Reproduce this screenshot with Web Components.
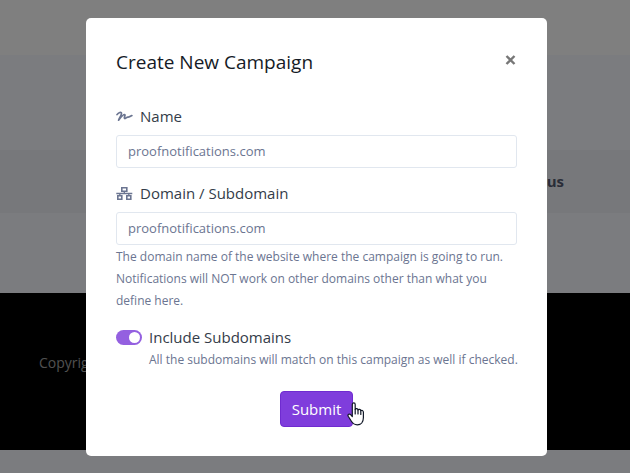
<!DOCTYPE html>
<html lang="en">
<head>
<meta charset="utf-8">
<meta name="viewport" content="width=device-width, initial-scale=1">
<title>Create New Campaign</title>
<style>
    :root {
        --primary: #7f3ddc;
        --primary-border: #6f2bd0;
        --text-color: #343c49;
        --muted-color: #6b7591;
        --border-color: #e1e7ef;
    }
    body {
        margin: 0;
        font-family: "Open Sans", "Noto Sans", sans-serif;
        font-size: 15px;
        line-height: 24px;
        color: var(--text-color);
    }
</style>
</head>
<body>
<page-shell>
    <span slot="link">Contact us</span>
    <span slot="footer">Copyright</span>
</page-shell>
<modal-dialog heading="Create New Campaign">
    <text-field label="Name" icon="signature" value="proofnotifications.com"></text-field>
    <text-field label="Domain / Subdomain" icon="network" value="proofnotifications.com">
        The domain name of the website where the campaign is going to run. Notifications will NOT work on other domains other than what you define here.
    </text-field>
    <toggle-switch label="Include Subdomains">All the subdomains will match on this campaign as well if checked.</toggle-switch>
    <submit-button slot="actions">Submit</submit-button>
</modal-dialog>

<script>
const icons = {
    signature: `<svg viewBox="0 0 17 14" width="17" height="14" fill="none" stroke="currentColor" stroke-width="1.700" stroke-linecap="round" stroke-linejoin="round" aria-hidden="true">
        <path d="M1 5.600C2.500 3.300 5.400 2.600 5.500 4.300C5.600 6 3.400 8.800 2.600 11.200C4.400 8.800 6.800 5.400 8.600 5.500C10 5.700 7.400 9 8.700 9.500C9.900 9.900 10.900 7.800 11.800 8C12.500 8.200 14 7.700 15.900 6.600"/>
    </svg>`,
    network: `<svg viewBox="0 0 17 14" width="17" height="14" fill="none" stroke="currentColor" aria-hidden="true">
        <path stroke-width="1.600" d="M5.800 1.800h5v3.400h-5zM1.800 9.800h4v3.400h-4zM10.800 9.800h4v3.400h-4z"/>
        <path stroke-width="1.300" d="M0.300 7.500h16M8.300 5.500v2M3.800 7.500v2M12.800 7.500v2"/>
    </svg>`
};

class PageShell extends HTMLElement {
    constructor() {
        super();
        this.attachShadow({ mode: 'open' });
    }

    connectedCallback() {
        this.shadowRoot.innerHTML = `
            <style>
                :host {
                    display: flex;
                    flex-direction: column;
                    min-height: 100vh;
                    background: #f7f8ff;
                }
                header {
                    height: 55px;
                    background: #fff;
                }
                main {
                    padding: 95px 0 80px;
                }
                nav {
                    display: flex;
                    justify-content: flex-end;
                    padding: 19px 66px 20px;
                    background: #eff0f6;
                    font-weight: 700;
                    color: #545b70;
                }
                footer {
                    padding: 58px 39px 75px;
                    background: #000;
                    font-size: 14px;
                    color: #a0a0a0;
                }
            </style>
            <header></header>
            <main><nav><slot name="link"></slot></nav></main>
            <footer><slot name="footer"></slot></footer>
        `;
    }
}

class ModalDialog extends HTMLElement {
    constructor() {
        super();
        this.attachShadow({ mode: 'open' });
    }

    connectedCallback() {
        this.shadowRoot.innerHTML = `
            <style>
                :host {
                    position: fixed;
                    inset: 0;
                    display: flex;
                    justify-content: center;
                    align-items: flex-start;
                    padding: 18px 12px 0 15px;
                    overflow: auto;
                    background: rgba(0, 0, 0, 0.5);
                }
                section {
                    box-sizing: border-box;
                    width: 100%;
                    max-width: 461px;
                    padding: 32px 30px 29px;
                    border-radius: 5px;
                    background: #fff;
                }
                header {
                    display: flex;
                    justify-content: space-between;
                    align-items: center;
                    margin-bottom: 30px;
                }
                h1 {
                    margin: 0;
                    font-size: 19px;
                    font-weight: 500;
                    line-height: 24px;
                    color: #151b26;
                }
                .close {
                    display: flex;
                    padding: 0;
                    border: 0;
                    background: none;
                    color: #777;
                    cursor: pointer;
                }
                form {
                    display: flex;
                    flex-direction: column;
                    gap: 13px;
                }
                .actions {
                    display: flex;
                    justify-content: center;
                    margin-top: 7px;
                }
            </style>
            <section role="dialog" aria-modal="true" aria-labelledby="heading">
                <header>
                    <h1 id="heading">${this.getAttribute('heading')}</h1>
                    <button class="close" type="button" aria-label="Close">
                        <svg width="13" height="18" viewBox="0 0 13 18" fill="none" stroke="currentColor" stroke-width="2.400"><path d="M2.500 3l8 8M10.500 3l-8 8"/></svg>
                    </button>
                </header>
                <form>
                    <slot></slot>
                    <div class="actions"><slot name="actions"></slot></div>
                </form>
            </section>
        `;
        this.shadowRoot.querySelector('.close').addEventListener('click', () => this.remove());
    }
}

class TextField extends HTMLElement {
    constructor() {
        super();
        this.attachShadow({ mode: 'open' });
    }

    connectedCallback() {
        const hasHelp = this.textContent.trim() !== '';
        this.shadowRoot.innerHTML = `
            <style>
                :host {
                    display: block;
                }
                label {
                    display: flex;
                    align-items: center;
                    gap: 7px;
                    margin-bottom: 7px;
                }
                svg {
                    color: var(--muted-color);
                }
                input {
                    display: block;
                    box-sizing: border-box;
                    width: 100%;
                    height: 33px;
                    padding: 0 11px 1px;
                    border: 1px solid var(--border-color);
                    border-radius: 3px;
                    outline: 0;
                    background: #fff;
                    font: inherit;
                    font-size: 13px;
                    color: var(--muted-color);
                }
                input:focus {
                    border-color: var(--primary);
                }
                small {
                    display: block;
                    margin-top: 1px;
                    font-size: 12px;
                    line-height: 22px;
                    color: var(--muted-color);
                }
            </style>
            <label for="field">${icons[this.getAttribute('icon')]}<span>${this.getAttribute('label')}</span></label>
            <input id="field" type="text" value="${this.getAttribute('value')}">
            ${hasHelp ? '<small><slot></slot></small>' : ''}
        `;
    }
}

class ToggleSwitch extends HTMLElement {
    constructor() {
        super();
        this.attachShadow({ mode: 'open' });
    }

    connectedCallback() {
        this.shadowRoot.innerHTML = `
            <style>
                :host {
                    display: grid;
                    grid-template-columns: auto 1fr;
                    column-gap: 7px;
                    align-items: center;
                }
                input {
                    display: flex;
                    align-items: center;
                    box-sizing: border-box;
                    width: 26px;
                    height: 15px;
                    margin: 0;
                    padding: 2px;
                    border-radius: 8px;
                    background: #b6bccb;
                    appearance: none;
                    cursor: pointer;
                }
                input::before {
                    content: "";
                    width: 11px;
                    height: 11px;
                    border-radius: 50%;
                    background: #fff;
                }
                input:checked {
                    justify-content: flex-end;
                    background: #9460e0;
                }
                small {
                    grid-column: 2;
                    margin-right: -10px;
                    font-size: 12px;
                    line-height: 22px;
                    color: var(--muted-color);
                }
            </style>
            <input id="toggle" type="checkbox" role="switch" checked>
            <label for="toggle">${this.getAttribute('label')}</label>
            <small><slot></slot></small>
        `;
    }
}

class SubmitButton extends HTMLElement {
    constructor() {
        super();
        this.attachShadow({ mode: 'open' });
    }

    connectedCallback() {
        this.shadowRoot.innerHTML = `
            <style>
                :host {
                    display: block;
                    position: relative;
                }
                button {
                    display: block;
                    padding: 5px 11px;
                    border: 1px solid var(--primary-border);
                    border-radius: 4px;
                    background: var(--primary);
                    font: inherit;
                    font-weight: 500;
                    color: #fff;
                    cursor: pointer;
                }
                /* hand pointer resting on the edge of the button */
                svg {
                    position: absolute;
                    left: 67px;
                    top: 11px;
                    pointer-events: none;
                }
            </style>
            <button type="button"><slot></slot></button>
            <svg width="18" height="24" viewBox="0 0 18 24" fill="#fff" stroke="#111827" stroke-width="1.200" stroke-linejoin="round" stroke-linecap="round" aria-hidden="true">
                <path d="M5.300 14.500V2.500C5.300 .4 8.200 .4 8.200 2.500V7.500C8.700 6.200 10.800 6.500 11 8C11.500 7 13.600 7.200 13.800 8.700C14.500 7.900 16.400 8.300 16.400 10.200V15.500C16.400 19.800 14 22.800 10.300 22.800C7.200 22.800 5.500 21.200 4.200 19L1.200 14.200C.3 12.500 2.400 11.300 3.600 12.700Z"/>
                <path d="M8.200 7.500V12M11 8V12M13.800 8.700V12.500" fill="none"/>
            </svg>
        `;
    }
}

customElements.define('page-shell', PageShell);
customElements.define('modal-dialog', ModalDialog);
customElements.define('text-field', TextField);
customElements.define('toggle-switch', ToggleSwitch);
customElements.define('submit-button', SubmitButton);
</script>
</body>
</html>
